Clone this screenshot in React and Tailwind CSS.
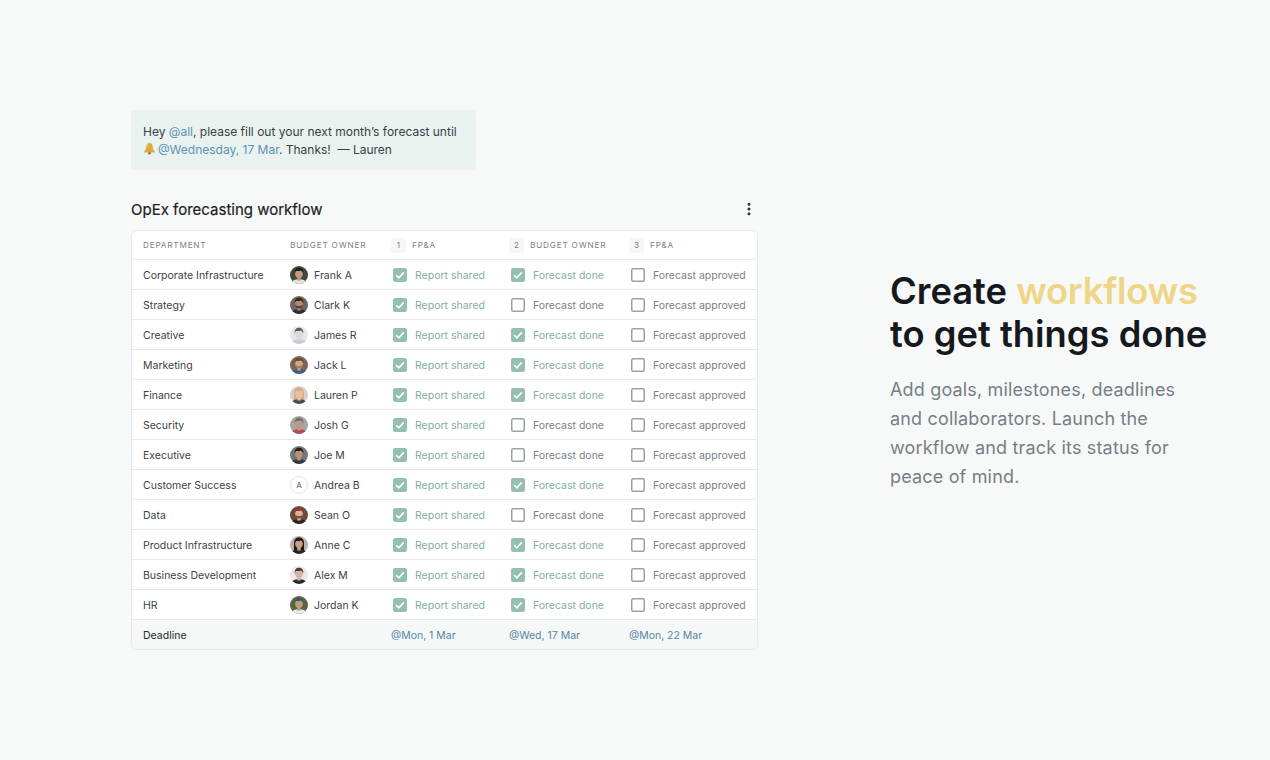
import { MoreVertical } from "lucide-react";

const rows = [
  { dept: "Corporate Infrastructure", name: "Frank A", done: true, bg: "#3f4a3a", hair: "#1c1a16", skin: "#c79a80", shirt: "#dfe6ea" },
  { dept: "Strategy", name: "Clark K", done: false, bg: "#6d6660", hair: "#3a2b22", skin: "#b08a74", shirt: "#2c2f33", beard: "#54402f" },
  { dept: "Creative", name: "James R", done: true, bg: "#e4e7ec", hair: "#5b6068", skin: "#dcd8d6", shirt: "#c5ccd6" },
  { dept: "Marketing", name: "Jack L", done: true, bg: "#77675a", hair: "#6e4a2e", skin: "#d0a588", shirt: "#3f5f80", beard: "#a77a58" },
  { dept: "Finance", name: "Lauren P", done: true, bg: "#d8d0c8", hair: "#d4ad7e", skin: "#e3c2ac", shirt: "#454a50", long: true },
  { dept: "Security", name: "Josh G", done: false, bg: "#a8a4a2", hair: "#77716d", skin: "#b99a8c", shirt: "#b8474e" },
  { dept: "Executive", name: "Joe M", done: false, bg: "#73767a", hair: "#23201e", skin: "#b98f76", shirt: "#33383f" },
  { dept: "Customer Success", name: "Andrea B", done: true, initial: "A" },
  { dept: "Data", name: "Sean O", done: false, bg: "#6b4a3c", hair: "#8a3d2a", skin: "#d9b39a", shirt: "#2a2424", beard: "#8a4a30" },
  { dept: "Product Infrastructure", name: "Anne C", done: true, bg: "#b9b2aa", hair: "#201a17", skin: "#c99f88", shirt: "#26242a", long: true },
  { dept: "Business Development", name: "Alex M", done: true, bg: "#e6e8ea", hair: "#4a3d35", skin: "#d8b5a0", shirt: "#24272b" },
  { dept: "HR", name: "Jordan K", done: true, bg: "#56683f", hair: "#3f5468", skin: "#c09a80", shirt: "#e8ebe6" },
];

const gridCols = "grid grid-cols-[147px_101px_118px_120px_1fr] pl-[11px] items-center";

function Avatar({ person }) {
  if (person.initial) {
    return (
      <div className="w-[18px] h-[18px] rounded-full bg-white border border-[#dfe3e5] flex items-center justify-center text-[8px] font-medium text-[#70777e]">
        {person.initial}
      </div>
    );
  }
  return (
    <svg width="18" height="18" viewBox="0 0 18 18" className="rounded-full">
      <rect width="18" height="18" fill={person.bg} />
      {person.long && <path d="M4 16V7c0-3.500 2.200-5.500 5-5.500s5 2 5 5.500v9z" fill={person.hair} />}
      <path d="M1 18c.6-3.600 4-4.800 8-4.800s7.400 1.200 8 4.800z" fill={person.shirt} />
      <rect x="7.300" y="10" width="3.400" height="4.500" fill={person.skin} />
      <ellipse cx="9" cy="7.500" rx="3.900" ry="4.900" fill={person.skin} />
      {person.beard && <path d="M5.200 8.500c.4 3 1.800 4 3.800 4s3.400-1 3.800-4c-1 1.400-2.400 1.600-3.800 1.600s-2.800-.2-3.800-1.600z" fill={person.beard} />}
      <path d="M4.800 7.800C4.200 3.600 6.500 1.800 9 1.800s5 1.700 4.200 6c-.4-2-1.300-3.100-2.500-3.400-1.800.7-3.900.5-4.700.7-.6.500-1 1.400-1.200 2.700z" fill={person.hair} />
    </svg>
  );
}

function Check({ on, label }) {
  return (
    <div className={`flex items-center gap-2 pl-[2px] ${on ? "text-[#84ad9d]" : "text-[#7a8188]"}`}>
      {on ? (
        <svg width="14" height="14" viewBox="0 0 14 14" className="shrink-0">
          <rect width="14" height="14" rx="2" fill="#95c0b0" />
          <path d="M3.200 7.200l2.600 2.600 5-5.400" fill="none" stroke="#fff" strokeWidth="1.600" />
        </svg>
      ) : (
        <svg width="14" height="14" viewBox="0 0 14 14" className="shrink-0">
          <rect x=".75" y=".75" width="12.500" height="12.500" rx="1.500" fill="#fff" stroke="#9aa1a8" strokeWidth="1.500" />
        </svg>
      )}
      <span className="pt-[2px]">{label}</span>
    </div>
  );
}

function Step({ n, label }) {
  return (
    <div className="flex items-center gap-[6px]">
      <span className="w-[15px] h-[15px] rounded-[3px] bg-[#f5f7f6] flex items-center justify-center text-[8px] tracking-normal">{n}</span>
      <span>{label}</span>
    </div>
  );
}

function Bell() {
  return (
    <svg width="13" height="13" viewBox="0 0 13 13" className="inline-block align-[-1px] mr-[2px]">
      <path d="M6.500 1C4.300 1 3.400 2.700 3.300 4.600c-.1 2-.6 3.400-2.100 4.900v.9h10.600v-.9C10.300 8 9.800 6.600 9.700 4.600 9.600 2.700 8.700 1 6.500 1z" fill="#e0a83a" />
      <path d="M3.800 3.200C4.200 2 5 1.500 5.800 1.400 4.900 2.400 4.700 3.700 4.500 5.400z" fill="#f3d27c" />
      <circle cx="6.500" cy="11.300" r="1.300" fill="#9c6a2a" />
    </svg>
  );
}

export default function App() {
  return (
    <div className="h-[760px] bg-[#f7f9f8] flex font-['Inter',sans-serif] overflow-hidden">
      <div className="pl-[131px] pt-[110px] w-[890px] shrink-0">
        <div className="w-[345px] h-[60px] bg-[#e9f2ef] rounded-[4px] px-3 pt-[13px] text-[12px] leading-[18px] text-[#3a3f45]">
          <div>Hey <span className="text-[#5b93b5]">@all</span>, please fill out your next month’s forecast until</div>
          <div><Bell /><span className="text-[#5b93b5]">@Wednesday, 17 Mar</span>. Thanks!&nbsp; — Lauren</div>
        </div>

        <div className="w-[627px] flex items-center justify-between mt-[29px] h-[20px] pr-[1px]">
          <h2 className="text-[15px] pt-[2px] font-normal text-[#1d2125] [-webkit-text-stroke:0.2px_#1d2125]">OpEx forecasting workflow</h2>
          <MoreVertical size={16} strokeWidth={2.500} className="text-[#2b3036]" />
        </div>

        <div className="w-[627px] mt-[11px] bg-white border border-[#e6e9e9] rounded-[6px] overflow-hidden text-[10.500px] text-[#3a3f45]">
          <div className={`${gridCols} h-[28px] text-[8.200px] tracking-[0.8px] text-[#7a8188] uppercase`}>
            <span>Department</span>
            <span>Budget owner</span>
            <Step n="1" label="FP&A" />
            <Step n="2" label="Budget owner" />
            <Step n="3" label="FP&A" />
          </div>
          {rows.map((r) => (
            <div key={r.dept} className={`${gridCols} h-[30px] border-t border-[#e6e9e9]`}>
              <span className="pt-[2px]">{r.dept}</span>
              <div className="flex items-center gap-[6px]">
                <Avatar person={r} />
                <span className="pt-[2px]">{r.name}</span>
              </div>
              <Check on label="Report shared" />
              <Check on={r.done} label="Forecast done" />
              <Check on={false} label="Forecast approved" />
            </div>
          ))}
          <div className={`${gridCols} h-[30px] border-t border-[#e6e9e9] bg-[#f6f8f7]`}>
            <span className="col-span-2 pt-[2px] text-[#24282d]">Deadline</span>
            <span className="pt-[2px] text-[#5585a8]">@Mon, 1 Mar</span>
            <span className="pt-[2px] text-[#5585a8]">@Wed, 17 Mar</span>
            <span className="pt-[2px] text-[#5585a8]">@Mon, 22 Mar</span>
          </div>
        </div>
      </div>

      <div className="pt-[270px]">
        <h1 className="text-[36.350px] leading-[43px] font-semibold text-[#15191d] whitespace-nowrap">
          Create <span className="text-[#efd586] tracking-[-0.2px]">workflows</span>
          <br />
          to get things done
        </h1>
        <p className="mt-[19px] w-[300px] text-[18px] leading-[29px] tracking-[0.17px] text-[#767e86]">
          Add goals, milestones, deadlines and collaborators. Launch the workflow and track its status for peace of mind.
        </p>
      </div>
    </div>
  );
}
